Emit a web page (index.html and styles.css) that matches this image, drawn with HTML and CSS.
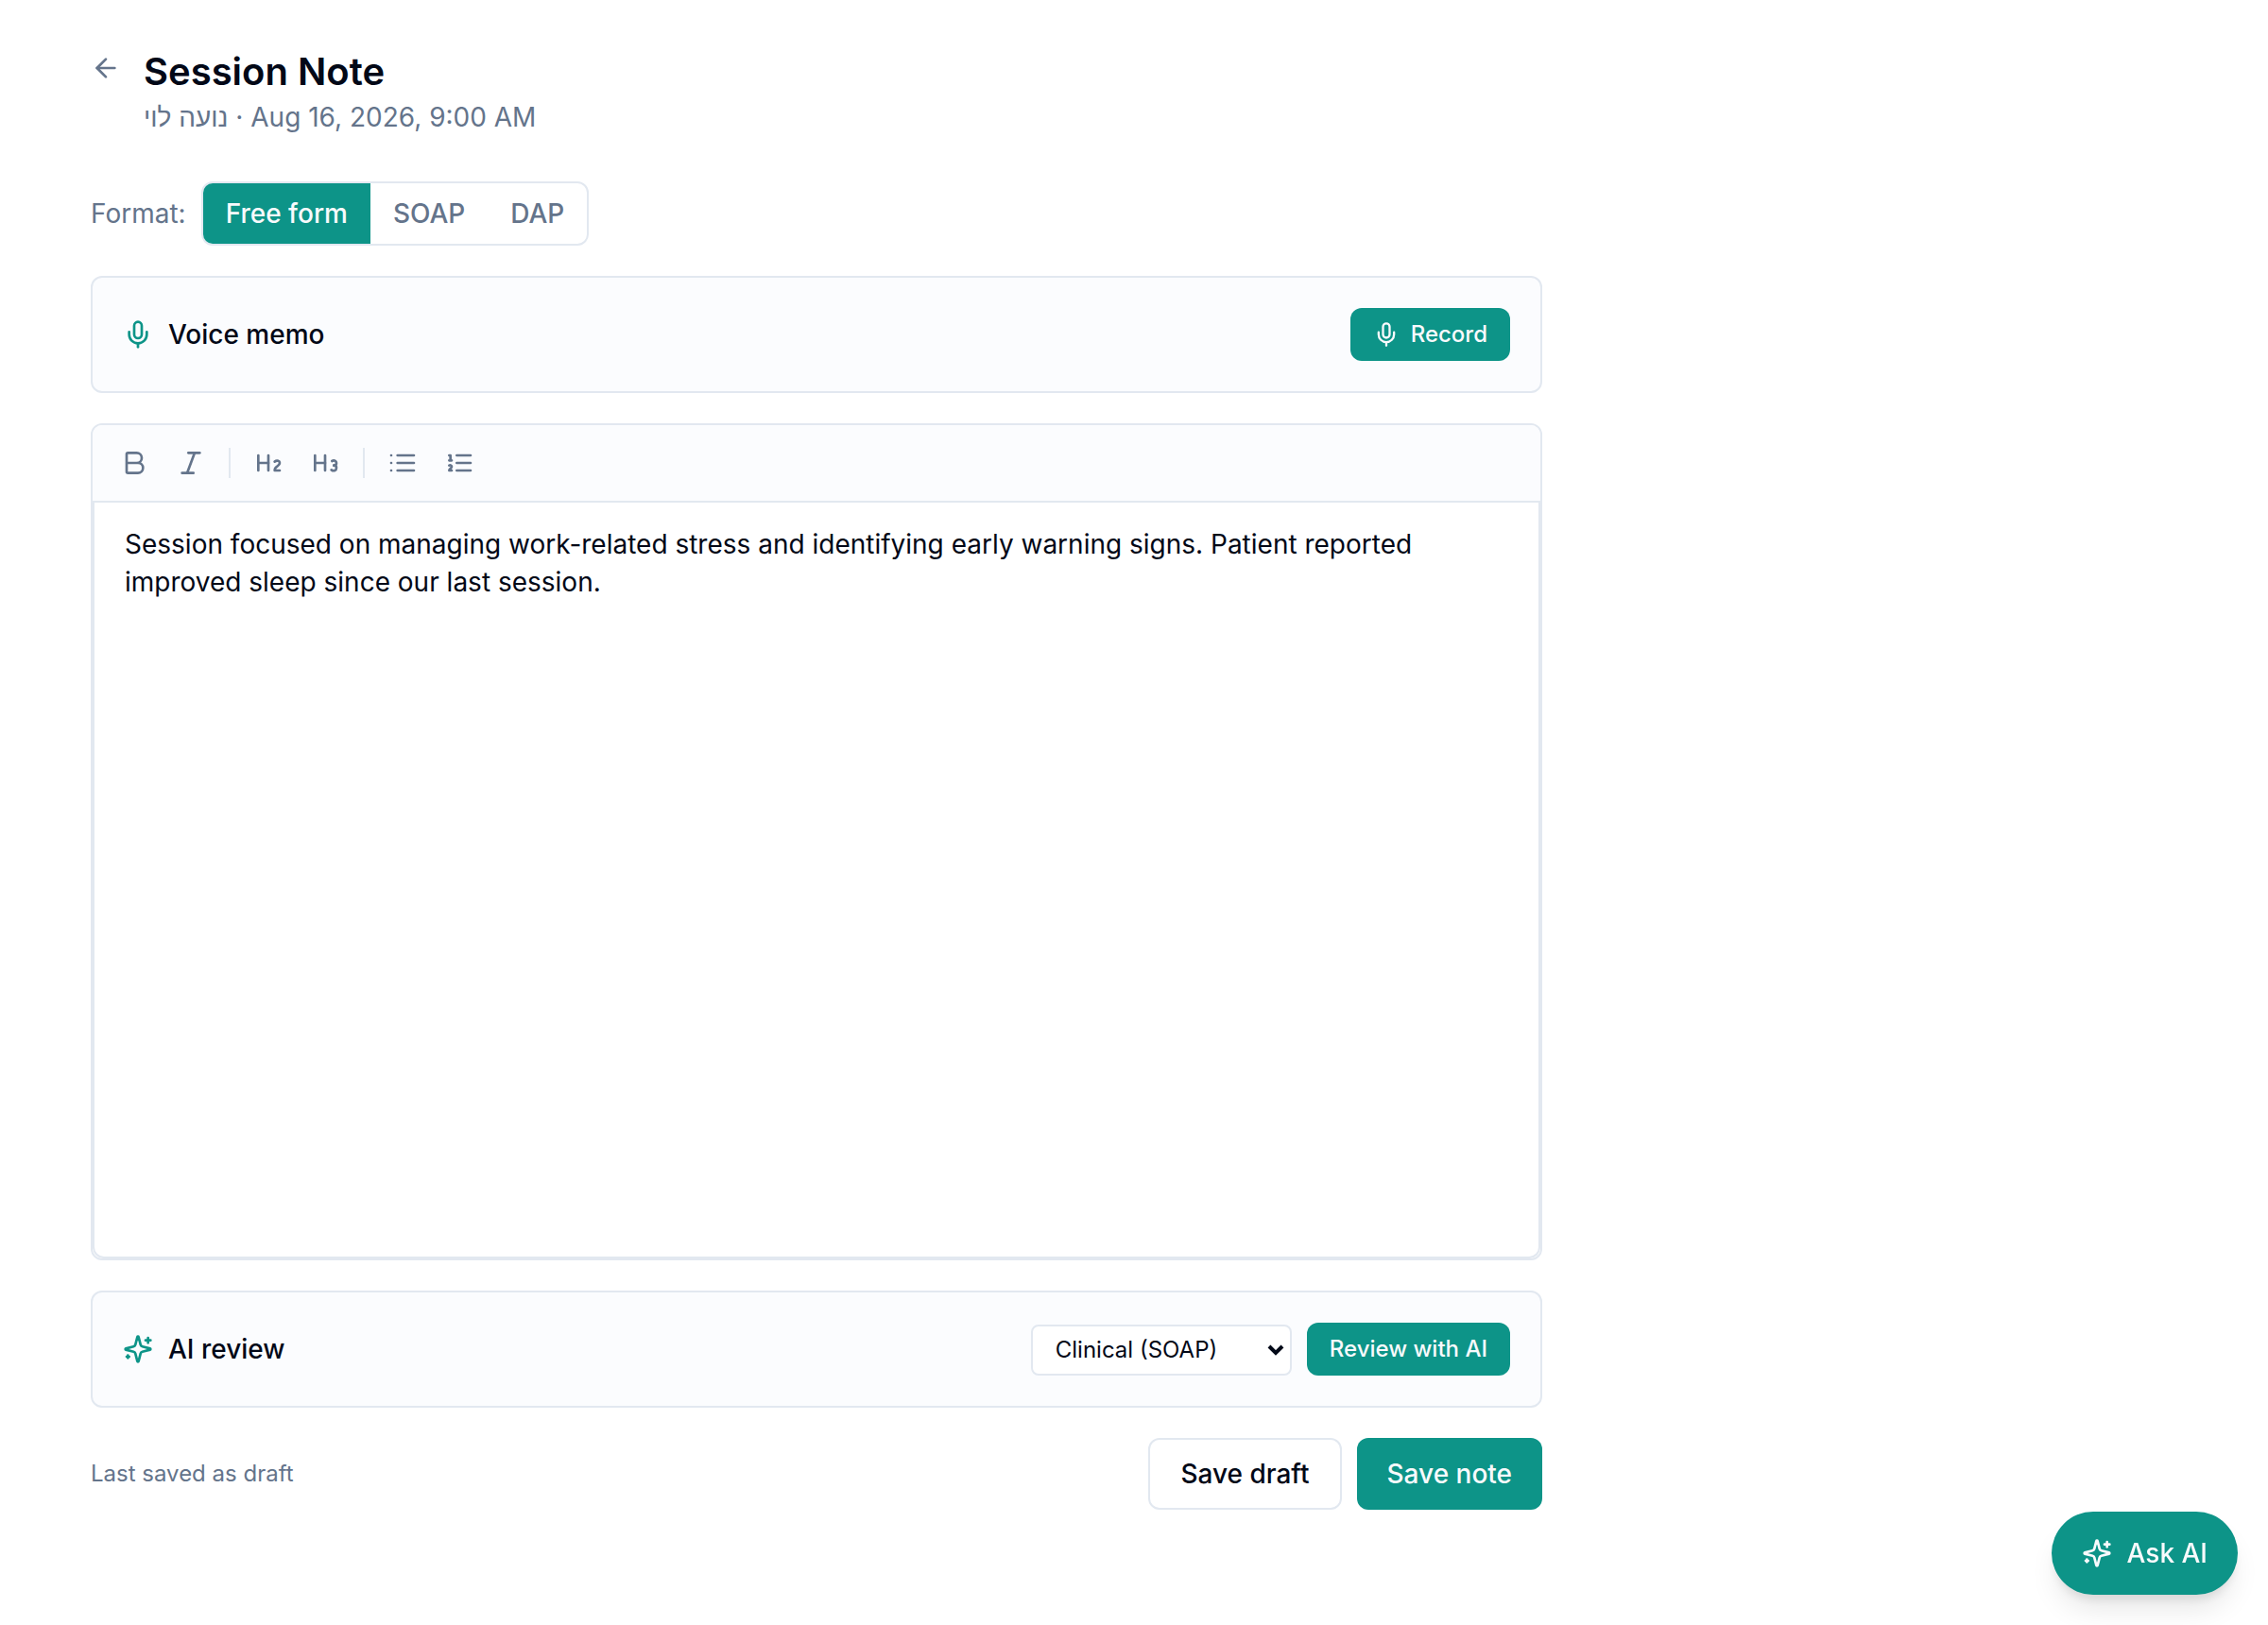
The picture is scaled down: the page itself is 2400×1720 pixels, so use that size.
FILE: index.html
```html
<!DOCTYPE html>
<html lang="en">
<head>
<meta charset="utf-8">
<meta name="viewport" content="width=device-width, initial-scale=1">
<title>Session Note</title>
<link rel="stylesheet" href="styles.css">
</head>
<body>
<svg class="sprite" aria-hidden="true">
  <symbol id="mic" viewBox="0 0 24 24"><path d="M12 2a3 3 0 0 0-3 3v7a3 3 0 0 0 6 0V5a3 3 0 0 0-3-3Z"/><path d="M19 10v2a7 7 0 0 1-14 0v-2"/><path d="M12 19v3"/></symbol>
  <symbol id="spark" viewBox="0 0 24 24"><path d="M9.937 15.5A2 2 0 0 0 8.5 14.063l-6.135-1.582a.5.5 0 0 1 0-.962L8.5 9.936A2 2 0 0 0 9.937 8.5l1.582-6.135a.5.5 0 0 1 .963 0L14.063 8.5A2 2 0 0 0 15.5 9.937l6.135 1.581a.5.5 0 0 1 0 .964L15.5 14.063a2 2 0 0 0-1.437 1.437l-1.582 6.135a.5.5 0 0 1-.963 0z"/><path d="M20 3v4"/><path d="M22 5h-4"/><path d="M4 17v2"/><path d="M5 18H3"/></symbol>
</svg>
<main class="page">
  <header class="header">
    <a class="back" href="#" aria-label="Back"><svg class="icon" viewBox="0 0 24 24"><path d="m12 19-7-7 7-7"/><path d="M19 12H5"/></svg></a>
    <div>
      <h1 class="title">Session Note</h1>
      <p class="subtitle">נועה לוי · Aug 16, 2026, 9:00 AM</p>
    </div>
  </header>

  <div class="format">
    <span id="format-label" class="format-label">Format:</span>
    <div class="segments" role="group" aria-labelledby="format-label">
      <button type="button" class="segment segment-active" aria-pressed="true">Free form</button>
      <button type="button" class="segment" aria-pressed="false">SOAP</button>
      <button type="button" class="segment" aria-pressed="false">DAP</button>
    </div>
  </div>

  <section class="card">
    <h2 class="card-title"><svg class="icon"><use href="#mic"/></svg>Voice memo</h2>
    <button type="button" class="btn btn-small btn-primary"><svg class="icon icon-small"><use href="#mic"/></svg>Record</button>
  </section>

  <section class="editor">
    <div class="toolbar" role="toolbar" aria-label="Formatting">
      <button type="button" class="tool" aria-label="Bold"><svg class="icon" viewBox="0 0 24 24"><path d="M6 12h9a4 4 0 0 1 0 8H7a1 1 0 0 1-1-1V5a1 1 0 0 1 1-1h7a4 4 0 0 1 0 8"/></svg></button>
      <button type="button" class="tool" aria-label="Italic"><svg class="icon" viewBox="0 0 24 24"><path d="M19 4h-9"/><path d="M14 20H5"/><path d="M15 4 9 20"/></svg></button>
      <span class="divider"></span>
      <button type="button" class="tool" aria-label="Heading 2"><svg class="icon" viewBox="0 0 24 24"><path d="M4 12h8"/><path d="M4 18V6"/><path d="M12 18V6"/><path d="M21 18h-4c0-4 4-3 4-6 0-1.5-2-2.5-4-1"/></svg></button>
      <button type="button" class="tool" aria-label="Heading 3"><svg class="icon" viewBox="0 0 24 24"><path d="M4 12h8"/><path d="M4 18V6"/><path d="M12 18V6"/><path d="M17.5 10.5c1.7-1 3.5 0 3.5 1.5a2 2 0 0 1-2 2"/><path d="M17 17.5c2 1.5 4 .3 4-1.5a2 2 0 0 0-2-2"/></svg></button>
      <span class="divider"></span>
      <button type="button" class="tool" aria-label="Bullet list"><svg class="icon" viewBox="0 0 24 24"><path d="M3 6h.01M3 12h.01M3 18h.01M8 6h13M8 12h13M8 18h13"/></svg></button>
      <button type="button" class="tool" aria-label="Numbered list"><svg class="icon" viewBox="0 0 24 24"><path d="M10 6h11M10 12h11M10 18h11M4 6h1v4M4 10h2"/><path d="M6 18H4c0-1 2-2 2-3s-1-1.5-2-1"/></svg></button>
    </div>
    <textarea class="note" aria-label="Session note" spellcheck="false">Session focused on managing work-related stress and identifying early warning signs. Patient reported improved sleep since our last session.</textarea>
  </section>

  <section class="card">
    <h2 class="card-title"><svg class="icon"><use href="#spark"/></svg>AI review</h2>
    <div class="actions">
      <div class="select">
        <select class="select-input" aria-label="Review style">
          <option>Clinical (SOAP)</option>
        </select>
        <svg class="chevron" viewBox="0 0 18 12"><path d="m2 2 7 7 7-7"/></svg>
      </div>
      <button type="button" class="btn btn-small btn-primary">Review with AI</button>
    </div>
  </section>

  <footer class="footer">
    <span class="status">Last saved as draft</span>
    <div class="actions">
      <button type="button" class="btn btn-outline">Save draft</button>
      <button type="button" class="btn btn-primary">Save note</button>
    </div>
  </footer>
</main>
<button type="button" class="ask"><svg class="icon"><use href="#spark"/></svg>Ask AI</button>
</body>
</html>
```
FILE: styles.css
```css
:root {
  --primary: #0d9488;
  --on-primary: #f8fafc;
  --text: #020817;
  --muted: #64748b;
  --border: #e2e8f0;
  --surface: #fbfcfe;
}

* { box-sizing: border-box; }

body {
  margin: 0;
  background: #fff;
  color: var(--text);
  font-family: Inter, "Liberation Sans", sans-serif;
  font-size: 28px;
  line-height: 40px;
}

h1, h2, p { margin: 0; }

button, select, textarea { font: inherit; color: inherit; margin: 0; }

button { cursor: pointer; border: 0; background: none; }

.sprite { display: none; }

.icon {
  flex: none;
  display: block;
  width: 32px;
  height: 32px;
  fill: none;
  stroke: currentColor;
  stroke-width: 2;
  stroke-linecap: round;
  stroke-linejoin: round;
}

.icon-small { width: 28px; height: 28px; }

.page {
  display: flex;
  flex-direction: column;
  gap: 32px;
  max-width: 1728px;
  padding: 48px 96px;
}

.header {
  display: flex;
  align-items: flex-start;
  gap: 24px;
  margin-bottom: 16px;
}

.back { padding-top: 8px; color: var(--muted); }

.title { font-size: 40px; line-height: 56px; font-weight: 600; }

.subtitle { color: var(--muted); }

.format { display: flex; align-items: center; gap: 16px; }

.format-label { color: var(--muted); }

.segments {
  display: flex;
  overflow: hidden;
  border: 2px solid var(--border);
  border-radius: 12px;
}

.segment { padding: 12px 24px; color: var(--muted); font-weight: 500; }

.segment-active { background: var(--primary); color: var(--on-primary); }

.card {
  display: flex;
  align-items: center;
  justify-content: space-between;
  padding: 32px;
  border: 2px solid var(--border);
  border-radius: 12px;
  background: var(--surface);
}

.card-title {
  display: flex;
  align-items: center;
  gap: 16px;
  font-size: 28px;
  font-weight: 500;
}

.card-title .icon { color: var(--primary); }

.actions { display: flex; align-items: flex-end; gap: 16px; }

.btn {
  display: flex;
  align-items: center;
  justify-content: center;
  gap: 12px;
  min-height: 76px;
  padding: 0 32px;
  border-radius: 12px;
  font-weight: 500;
}

.btn-small {
  min-height: 56px;
  padding: 0 24px;
  font-size: 24px;
  line-height: 32px;
}

.btn-primary { background: var(--primary); color: var(--on-primary); }

.btn-outline { border: 2px solid var(--border); background: #fff; }

.editor {
  overflow: hidden;
  border: 2px solid var(--border);
  border-radius: 12px;
}

.toolbar {
  display: flex;
  align-items: center;
  gap: 4px;
  padding: 12px 16px;
  border-bottom: 2px solid var(--border);
  background: var(--surface);
}

.tool { padding: 12px; color: var(--muted); }

.divider { width: 2px; height: 32px; margin: 0 8px; background: var(--border); }

.note {
  display: block;
  width: 100%;
  min-height: 800px;
  padding: 24px 32px;
  border: 2px solid var(--border);
  border-top: 0;
  border-radius: 0 0 12px 12px;
  outline: 0;
  resize: none;
  background: #fff;
}

.select { display: grid; align-items: center; }

.select-input {
  grid-area: 1 / 1;
  appearance: none;
  height: 54px;
  padding: 0 76px 0 24px;
  border: 2px solid var(--border);
  border-radius: 8px;
  background: #fff;
  font-size: 24px;
  line-height: 32px;
}

.chevron {
  grid-area: 1 / 1;
  justify-self: end;
  width: 18px;
  height: 12px;
  margin-right: 8px;
  fill: none;
  stroke: var(--text);
  stroke-width: 4;
  pointer-events: none;
}

.footer { display: flex; align-items: center; justify-content: space-between; }

.status { color: var(--muted); font-size: 24px; line-height: 32px; }

.ask {
  position: fixed;
  right: 32px;
  bottom: 32px;
  display: flex;
  align-items: center;
  gap: 16px;
  padding: 24px 32px;
  border-radius: 44px;
  background: var(--primary);
  color: var(--on-primary);
  font-weight: 500;
  box-shadow: 0 20px 30px -6px rgb(0 0 0 / 10%), 0 8px 12px -4px rgb(0 0 0 / 10%);
}
```
